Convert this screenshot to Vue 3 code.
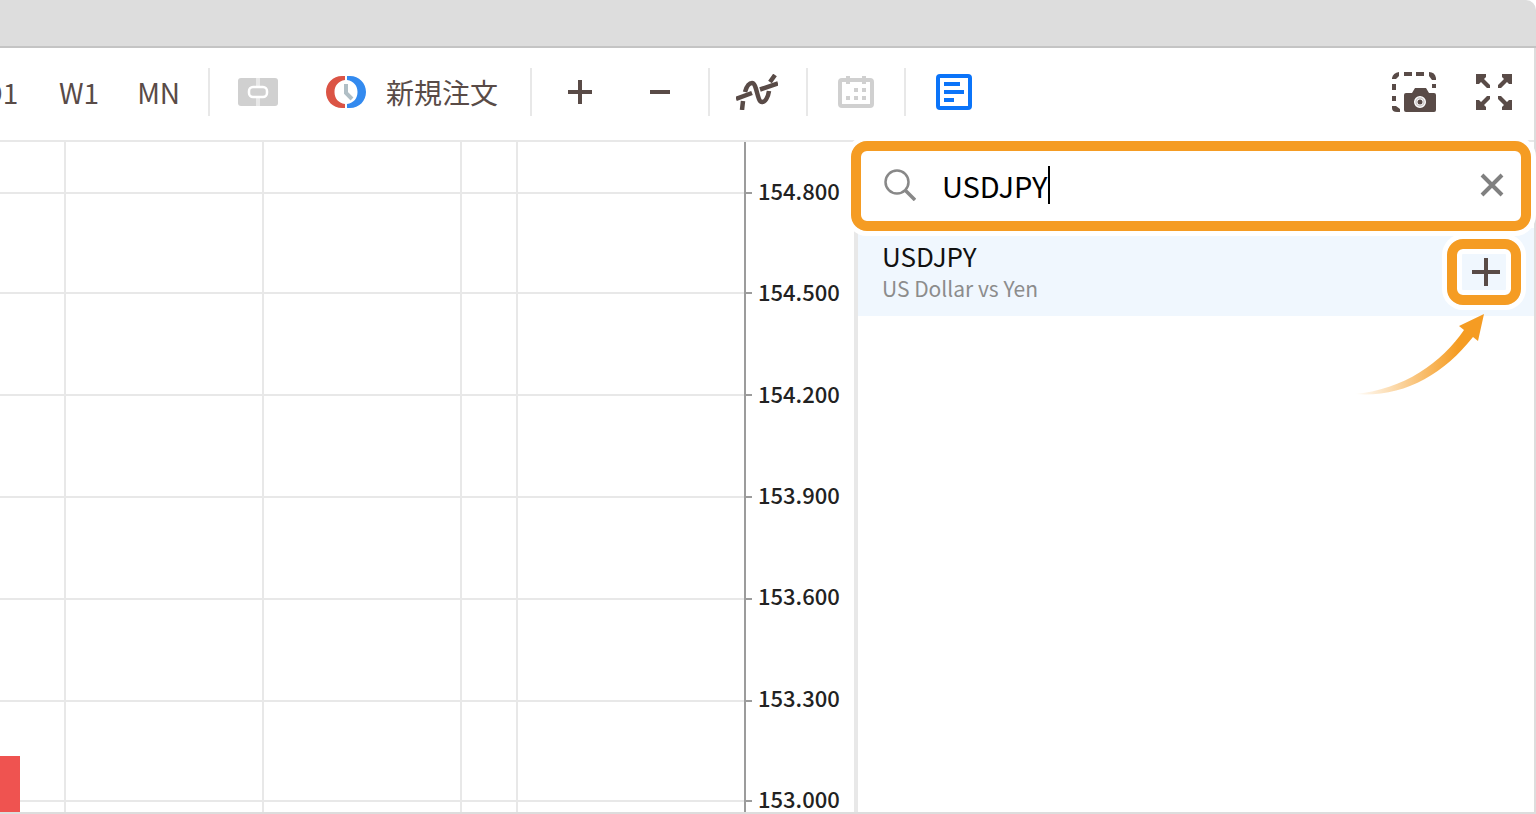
<script setup>
import { ref } from 'vue'

const periods = ['D1', 'W1', 'MN']
const prices = ['154.800', '154.500', '154.200', '153.900', '153.600', '153.300', '153.000']
const rows = [51, 151, 253, 355, 457, 559, 659]
const columns = [65, 263, 461, 517]
const query = ref('USDJPY')
const results = [{ symbol: 'USDJPY', name: 'US Dollar vs Yen' }]
</script>

<template>
  <div class="window">
    <header class="titlebar"></header>
    <div class="body">
      <nav class="toolbar" aria-label="Chart tools">
        <div class="group periods">
          <button v-for="p in periods" :key="p" class="period">{{ p }}</button>
        </div>
        <div class="group one-click">
          <button aria-label="One click trading">
            <svg width="40" height="28" viewBox="0 0 40 28">
              <rect width="40" height="28" rx="3" fill="#d0d0d0" />
              <path d="M20 0v9M20 19v9" stroke="#e8e8e8" stroke-width="4" />
              <rect x="11" y="9" width="18" height="10" rx="4" fill="#d0d0d0" stroke="#fff" stroke-width="2.5" />
            </svg>
          </button>
          <button class="order">
            <svg width="40" height="32" viewBox="0 0 40 32">
              <path d="M19 0H16C7 0 0 7 0 16s7 16 16 16h3v-4C12 27 8.500 22 8.500 16S12 5 19 4z" fill="#db5445" />
              <path d="M21 0H24c9 0 16 7 16 16s-7 16-16 16h-3v-4C28 27 31.500 22 31.500 16S28 5 21 4z" fill="#338aef" />
              <path d="M20 8v9l6 6" fill="none" stroke="#b0bec5" stroke-width="4" />
            </svg>
            <span>新規注文</span>
          </button>
        </div>
        <div class="group zoom">
          <button aria-label="Zoom in">
            <svg width="24" height="24" viewBox="0 0 24 24"><path d="M12 0v24M0 12h24" stroke="#594b47" stroke-width="4" /></svg>
          </button>
          <button aria-label="Zoom out">
            <svg width="20" height="24" viewBox="0 0 20 24"><path d="M0 12h20" stroke="#594b47" stroke-width="4" /></svg>
          </button>
        </div>
        <div class="group indicators">
          <button aria-label="Indicators">
            <svg width="42" height="36" viewBox="0 0 42 36" fill="none" stroke="#594b47">
              <path d="M0 25L16 19M24 15.500L42 9.500" stroke-width="4.500" />
              <path d="M6 36L7 27M9 18C11 11 14 9 16 9c5 0 5 19 10 19 3 0 6-4 7-11M34 8l5-7" stroke-width="4.500" />
            </svg>
          </button>
        </div>
        <div class="group calendar">
          <button aria-label="Calendar">
            <svg width="36" height="32" viewBox="0 0 36 32">
              <rect x="2" y="4" width="32" height="26" rx="2" fill="none" stroke="#d0d0d0" stroke-width="4" />
              <path d="M8 0h4v8H8zM24 0h4v8h-4zM16 12h4v4h-4zM24 12h4v4h-4zM8 20h4v4H8zM16 20h4v4h-4zM24 20h4v4h-4z" fill="#d0d0d0" />
            </svg>
          </button>
        </div>
        <div class="group watch">
          <button aria-label="Market watch">
            <svg width="36" height="36" viewBox="0 0 36 36" fill="none" stroke="#0b74f9" stroke-width="4">
              <rect x="2" y="2" width="32" height="32" rx="2" />
              <path d="M8 10h16M8 18h20M8 26h10" />
            </svg>
          </button>
        </div>
        <div class="group view">
          <button aria-label="Screenshot">
            <svg width="44" height="40" viewBox="0 0 44 40">
              <path d="M0 6Q1 1 7 0v4L4 7H0zM12 0h8v4h-8zM24 0h8v4h-8zM37 0q6 0 7 6v2h-4l-3-4zM0 12h4v6H0zM0 24h4v5H0zM0 34h4l4 3v3H5q-5 0-5-4zM40 12h4v4h-4z" fill="#594b47" />
              <path fill-rule="evenodd" d="M14 21h6l3-5h11l3 5h5q2 0 2 2v15q0 2-2 2H14q-2 0-2-2V23q0-2 2-2zM28 24a6 6 0 1 0 0 12 6 6 0 0 0 0-12z" fill="#594b47" />
              <circle cx="28" cy="30" r="4" fill="none" stroke="#cdc9c8" stroke-width="1.500" />
              <circle cx="28" cy="30" r="2.500" fill="#594b47" />
            </svg>
          </button>
          <button aria-label="Full screen">
            <svg width="36" height="36" viewBox="0 0 36 36" fill="#594b47">
              <path d="M0 0h10v3l-2 2 6 6v3h-3L5 8l-2 2H0z" />
              <path d="M36 0H26v3l2 2-6 6v3h3l6-6 2 2h3z" />
              <path d="M0 36h10v-3l-2-2 6-6v-3h-3l-6 6-2-2H0z" />
              <path d="M36 36H26v-3l2-2-6-6v-3h3l6 6 2-2h3z" />
            </svg>
          </button>
        </div>
      </nav>

      <main class="workspace">
        <section class="chart" aria-label="Price chart">
          <svg class="plot" width="100%" height="100%">
            <line v-for="y in rows" :key="y" x1="0" x2="100%" :y1="y" :y2="y" class="grid-line" />
            <line v-for="x in columns" :key="x" :x1="x" :x2="x" y1="0" y2="100%" class="grid-line" />
            <rect x="0" y="614" width="20" height="56" fill="#ef5350" />
          </svg>
          <svg class="ticks" width="8" height="100%">
            <line v-for="y in rows" :key="y" x1="0" x2="8" :y1="y" :y2="y" />
            <line x1="1" x2="1" y1="0" y2="100%" />
          </svg>
          <ul class="prices">
            <li v-for="price in prices" :key="price">{{ price }}</li>
          </ul>
        </section>

        <aside class="panel">
          <form class="search" @submit.prevent>
            <svg width="32" height="32" viewBox="0 0 32 32" fill="none" stroke="#888">
              <circle cx="13" cy="13" r="11.500" stroke-width="2.500" />
              <path d="M21.500 21.500L31 31" stroke-width="3.500" />
            </svg>
            <input v-model="query" type="text" aria-label="Search symbol" />
            <span class="caret"></span>
            <button type="button" class="clear" aria-label="Clear">
              <svg width="24" height="24" viewBox="0 0 24 24"><path d="M2 2l20 20M22 2L2 22" stroke="#808080" stroke-width="4" /></svg>
            </button>
            <span class="frame search-frame"></span>
          </form>
          <ul class="results">
            <li v-for="r in results" :key="r.symbol">
              <div class="result-text">
                <strong>{{ r.symbol }}</strong>
                <small>{{ r.name }}</small>
              </div>
              <button class="add" aria-label="Add symbol">
                <svg width="28" height="28" viewBox="0 0 28 28"><path d="M14 0v28M0 14h28" stroke="#594b47" stroke-width="4" /></svg>
                <span class="frame add-frame"></span>
              </button>
              <svg class="arrow" width="128" height="82" viewBox="0 0 128 82">
                <defs>
                  <linearGradient id="fade" x1="0" x2="1">
                    <stop offset="0" stop-color="#f59c23" stop-opacity="0" />
                    <stop offset=".8" stop-color="#f59c23" />
                  </linearGradient>
                </defs>
                <path d="M0 80C50 76 88 48 110 16L105 12L130 0L124 27L119 23C88 62 48 84 0 80Z" fill="url(#fade)" />
              </svg>
            </li>
          </ul>
        </aside>
      </main>
    </div>
  </div>
</template>

<style>
body {
  margin: 0;
  background: #fff;
}
</style>

<style scoped>
.window {
  box-sizing: border-box;
  min-height: 100vh;
  display: flex;
  flex-direction: column;
  overflow: hidden;
  font-family: "Noto Sans CJK JP", "Noto Sans", sans-serif;
  color: #594b47;
}
button {
  display: flex;
  align-items: center;
  padding: 0;
  border: 0;
  background: none;
  font: inherit;
  color: inherit;
}
svg {
  display: block;
  flex: none;
}
ul {
  list-style: none;
  margin: 0;
  padding: 0;
}
.titlebar {
  height: 46px;
  background: #ddd;
  border-bottom: 2px solid #c4c4c4;
  border-top-right-radius: 10px;
}
.body {
  flex: 1;
  display: flex;
  flex-direction: column;
  border-right: 2px solid #ddd;
  border-bottom: 2px solid #ddd;
}
.toolbar {
  display: flex;
  align-items: center;
  height: 94px;
  padding-bottom: 4px;
  box-sizing: border-box;
  border-bottom: 2px solid #e8e8e8;
  font-size: 28px;
}
.group {
  display: flex;
  align-items: center;
  height: 48px;
  box-sizing: border-box;
  padding: 0 28px;
  border-right: 2px solid #e8e8e8;
}
.periods {
  gap: 38px;
  margin-left: -47px;
}
.period {
  min-width: 40px;
  justify-content: center;
}
.one-click {
  gap: 48px;
  padding-right: 32px;
}
.order {
  gap: 20px;
  white-space: nowrap;
}
.zoom {
  gap: 58px;
  padding: 0 38px 0 36px;
}
.indicators {
  padding: 0 28px 0 26px;
}
.calendar,
.watch {
  padding: 0 30px;
}
.watch {
  border: 0;
}
.view {
  margin-left: auto;
  gap: 40px;
  padding: 0 22px;
  border: 0;
}
.workspace {
  flex: 1;
  display: grid;
  grid-template-columns: minmax(0, 1fr) 680px;
}
.chart {
  display: flex;
}
.plot {
  flex: 1;
  min-width: 0;
}
.grid-line {
  stroke: #e8e8e8;
  stroke-width: 2;
}
.ticks line {
  stroke: #9c9c9c;
  stroke-width: 2;
}
.prices {
  width: 102px;
  box-sizing: border-box;
  padding: 34px 0 0 6px;
  display: flex;
  flex-direction: column;
  justify-content: space-between;
  font-size: 22px;
  font-weight: 500;
  line-height: 28px;
  color: #222;
}
.panel {
  border-left: 4px solid #e8e8e8;
}
.search {
  position: relative;
  z-index: 1;
  display: flex;
  align-items: center;
  height: 86px;
  padding: 0 30px 0 26px;
}
.search input {
  field-sizing: content;
  height: 44px;
  margin-left: 26px;
  padding: 0;
  border: 0;
  outline: 0;
  background: none;
  font: 29px "Noto Sans CJK JP", "Noto Sans", sans-serif;
  color: #000;
}
.caret {
  width: 2px;
  height: 38px;
  background: #000;
}
.clear {
  margin-left: auto;
}
/* Orange callout with a white halo on both sides */
.frame {
  position: absolute;
  border: 10px solid #f59c23;
  border-radius: 16px;
  box-shadow: 0 0 0 5px #fff, inset 0 0 0 5px #fff;
  pointer-events: none;
}
.search-frame {
  inset: -1px 3px -3px -7px;
}
.add-frame {
  inset: -19px -21px -19px -25px;
}
.results li {
  position: relative;
  display: flex;
  align-items: center;
  justify-content: space-between;
  height: 88px;
  padding: 0 34px 0 24px;
  background: #f0f7fe;
}
.result-text {
  display: flex;
  flex-direction: column;
}
.result-text strong {
  font-size: 26px;
  font-weight: 400;
  line-height: 32px;
  color: #111;
}
.result-text small {
  font-size: 21px;
  line-height: 32px;
  color: #8c8c8c;
}
.add {
  position: relative;
}
.arrow {
  position: absolute;
  right: 52px;
  top: 86px;
  overflow: visible;
}
</style>
